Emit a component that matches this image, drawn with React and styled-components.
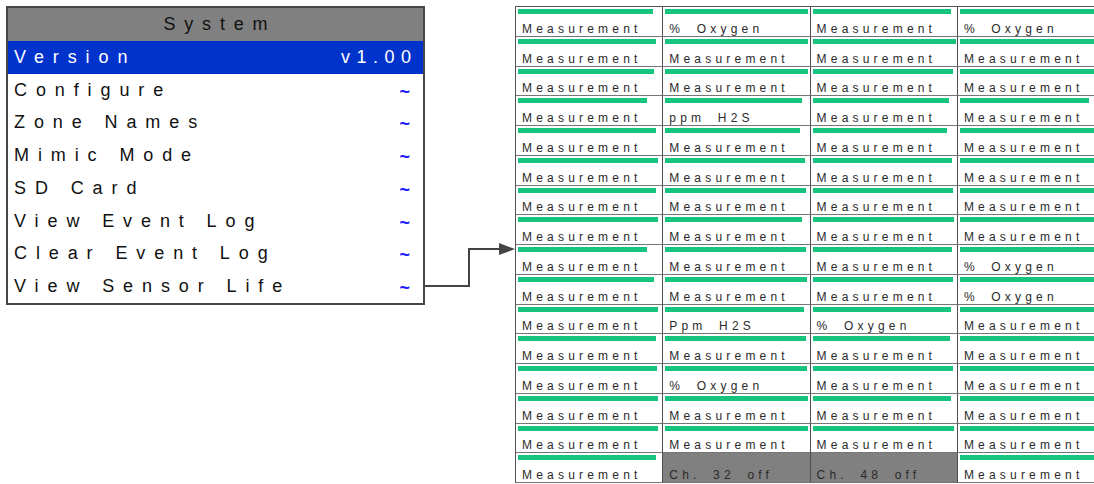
import React from "react";
import styled, { createGlobalStyle } from "styled-components";

const GlobalStyle = createGlobalStyle`
  html, body {
    margin: 0;
    padding: 0;
    background: #ffffff;
    overflow: hidden;
  }
  body {
    font-family: "Liberation Sans", Arial, sans-serif;
  }
`;

const Page = styled.div`
  width: 1094px;
  height: 484px;
  overflow: hidden;
  display: flex;
  align-items: flex-start;
  padding: 6px 0 0 6px;
  box-sizing: border-box;
`;

const Menu = styled.div`
  width: 419px;
  flex-shrink: 0;
  border: 2px solid #474747;
  box-sizing: border-box;
  background: #fff;
`;

const MenuHeader = styled.div`
  height: 33px;
  background: #808080;
  display: flex;
  align-items: center;
  justify-content: center;
  font-size: 18px;
  letter-spacing: 8.8px;
  padding-left: 8.8px;
  color: #111;
`;

const MenuRow = styled.div`
  height: 32.75px;
  display: flex;
  align-items: center;
  justify-content: space-between;
  padding: 0 12px 0 6px;
  background: ${(p) => (p.$selected ? "#0033cc" : "#ffffff")};
  color: ${(p) => (p.$selected ? "#ffffff" : "#111111")};
  font-size: 18px;
`;

const RowLabel = styled.span`
  letter-spacing: 8.9px;
  white-space: nowrap;
`;

const RowValue = styled.span`
  letter-spacing: 6.5px;
  margin-right: -6.5px;
`;

const Tilde = styled.span`
  color: #1a1aff;
  font-weight: bold;
  font-size: 18px;
  margin-right: 1px;
  transform: translateY(2px);
`;

const Connector = styled.svg`
  flex-shrink: 0;
  display: block;
`;

const Grid = styled.div`
  flex-shrink: 0;
  display: grid;
  grid-template-columns: repeat(4, 147.3px);
  grid-auto-rows: 29.75px;
  border-top: 1px solid #555;
  border-left: 1px solid #555;
`;

const Cell = styled.div`
  display: flex;
  flex-direction: column;
  justify-content: space-between;
  box-sizing: border-box;
  border-right: 1px solid #4f4f4f;
  border-bottom: 1px solid #767676;
  background: ${(p) => (p.$off ? "#808080" : "#ffffff")};
  padding: 2px 0 1px 0;
  overflow: hidden;
`;

const Bar = styled.div`
  height: 5px;
  margin-left: 2px;
  background: ${(p) => (p.$hidden ? "transparent" : "#17c47e")};
`;

const CellLabel = styled.div`
  font-size: 12px;
  line-height: 12px;
  letter-spacing: 4.2px;
  word-spacing: 5px;
  padding-left: 6px;
  color: #2a2a2a;
  white-space: nowrap;
`;

const menuItems = [
  { label: "Version", value: "v1.00", selected: true },
  { label: "Configure" },
  { label: "Zone Names" },
  { label: "Mimic Mode" },
  { label: "SD Card" },
  { label: "View Event Log" },
  { label: "Clear Event Log" },
  { label: "View Sensor Life" },
];

const M = "Measurement";
const labels = [
  [M, "% Oxygen", M, "% Oxygen"],
  [M, M, M, M],
  [M, M, M, M],
  [M, "ppm H2S", M, M],
  [M, M, M, M],
  [M, M, M, M],
  [M, M, M, M],
  [M, M, M, M],
  [M, M, M, "% Oxygen"],
  [M, M, M, "% Oxygen"],
  [M, "Ppm H2S", "% Oxygen", M],
  [M, M, M, M],
  [M, "% Oxygen", M, M],
  [M, M, M, M],
  [M, M, M, M],
  [M, "Ch. 32 off", "Ch. 48 off", M],
];

const bars = [
  [135, 143, 138, 145],
  [138, 143, 143, 145],
  [136, 143, 140, 145],
  [129, 137, 136, 129],
  [138, 135, 134, 145],
  [140, 140, 139, 142],
  [138, 141, 140, 145],
  [140, 137, 141, 143],
  [129, 141, 139, 145],
  [136, 142, 140, 145],
  [140, 139, 138, 142],
  [138, 141, 137, 145],
  [139, 142, 140, 143],
  [140, 143, 138, 145],
  [140, 143, 141, 145],
  [138, 0, 0, 145],
];

export default function App() {
  return (
    <>
      <GlobalStyle />
      <Page>
        <Menu>
          <MenuHeader>System</MenuHeader>
          {menuItems.map((item) => (
            <MenuRow key={item.label} $selected={item.selected}>
              <RowLabel>{item.label}</RowLabel>
              {item.value ? <RowValue>{item.value}</RowValue> : <Tilde>~</Tilde>}
            </MenuRow>
          ))}
        </Menu>
        <Connector width="90" height="300" viewBox="0 0 90 300">
          <path
            d="M0 280 H44 V243 H76"
            fill="none"
            stroke="#444"
            strokeWidth="2"
          />
          <polygon points="74,237 90,243 74,249" fill="#444" />
        </Connector>
        <Grid>
          {labels.map((row, r) =>
            row.map((label, c) => {
              const off = label.startsWith("Ch.");
              return (
                <Cell key={`${r}-${c}`} $off={off}>
                  <Bar $hidden={off} style={{ width: `${bars[r][c]}px` }} />
                  <CellLabel>{label}</CellLabel>
                </Cell>
              );
            })
          )}
        </Grid>
      </Page>
    </>
  );
}
